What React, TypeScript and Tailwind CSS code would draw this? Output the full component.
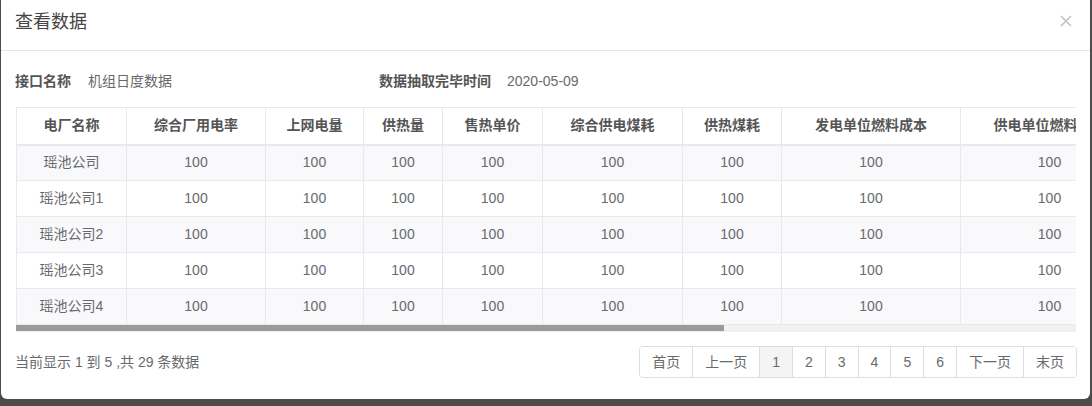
import React from "react";

const columns = [
  { title: "电厂名称", w: 110 },
  { title: "综合厂用电率", w: 139 },
  { title: "上网电量", w: 98 },
  { title: "供热量", w: 79 },
  { title: "售热单价", w: 100 },
  { title: "综合供电煤耗", w: 140 },
  { title: "供热煤耗", w: 99 },
  { title: "发电单位燃料成本", w: 179 },
  { title: "供电单位燃料成本", w: 178 },
  { title: "供热单位燃料成本", w: 179 },
  { title: "售电单价", w: 100 },
  { title: "发电量", w: 100 },
  { title: "售电量", w: 100 },
  { title: "入炉煤量", w: 100 },
];

const rows = ["瑶池公司", "瑶池公司1", "瑶池公司2", "瑶池公司3", "瑶池公司4"];

const pages = ["首页", "上一页", "1", "2", "3", "4", "5", "6", "下一页", "末页"];

export default function App() {
  const tableWidth = columns.reduce((s, c) => s + c.w, 0);

  return (
    <div className="w-[1092px] h-[406px] bg-[#4b4b4b] overflow-hidden font-['Liberation_Sans','Noto_Sans_CJK_SC',sans-serif] text-[14px] text-[#676a6c]">
      <div className="ml-[1px] w-[1089px] h-[399px] bg-white rounded-b-[6px] flex flex-col">
        {/* Header */}
        <div className="h-[51px] border-b border-[#e5e5e5] flex items-start justify-between pl-[14px] pr-[18px] pt-[9px]">
          <h4 className="text-[18px] leading-[26px] text-[#444]">查看数据</h4>
          <button className="mt-[6px] w-[12px] h-[12px]">
            <svg width="12" height="12" viewBox="0 0 12 12">
              <path d="M1 1 L11 11 M11 1 L1 11" stroke="#c2c2c2" strokeWidth="1.6" />
            </svg>
          </button>
        </div>

        {/* Body */}
        <div className="pl-[15px]">
          <div className="flex items-center h-[20px] mt-[20px] leading-[20px] -ml-[1px]">
            <div className="flex w-[364px]">
              <span className="font-bold text-[#555] mr-[17px]">接口名称</span>
              <span>机组日度数据</span>
            </div>
            <div className="flex">
              <span className="font-bold text-[#555] mr-[16px]">数据抽取完毕时间</span>
              <span>2020-05-09</span>
            </div>
          </div>

          <div className="mt-[16px] w-[1060px] overflow-hidden">
            <table
              className="border-collapse table-fixed"
              style={{ width: tableWidth }}
            >
              <thead>
                <tr>
                  {columns.map((c) => (
                    <th
                      key={c.title}
                      style={{ width: c.w }}
                      className="h-[37px] border border-[#e7eaec] border-b-2 font-bold text-[#555] text-center whitespace-nowrap overflow-hidden p-0"
                    >
                      {c.title}
                    </th>
                  ))}
                </tr>
              </thead>
              <tbody>
                {rows.map((r, i) => (
                  <tr key={r} className={i % 2 === 0 ? "bg-[#f9f9fb]" : "bg-white"}>
                    {columns.map((c, j) => (
                      <td
                        key={c.title}
                        className="h-[36px] border border-[#e7eaec] text-center whitespace-nowrap p-0"
                      >
                        {j === 0 ? r : "100"}
                      </td>
                    ))}
                  </tr>
                ))}
              </tbody>
            </table>
            {/* horizontal scrollbar */}
            <div className="h-[7px] bg-[#f1f1f1] flex items-start">
              <div className="w-[708px] h-[6px] bg-[#9b9b9b]" />
            </div>
          </div>

          {/* Footer */}
          <div className="mt-[14px] w-[1061px] flex items-center justify-between">
            <span className="leading-[20px] -ml-[1px]">当前显示 1 到 5 ,共 29 条数据</span>
            <ul className="flex border border-[#ddd] rounded-[4px] overflow-hidden">
              {pages.map((p) => (
                <li
                  key={p}
                  className={
                    "px-[12px] py-[6px] leading-[18px] border-l border-[#ddd] first:border-l-0 " +
                    (p === "1" ? "bg-[#f4f4f4]" : "bg-white")
                  }
                >
                  {p}
                </li>
              ))}
            </ul>
          </div>
        </div>
      </div>
    </div>
  );
}
